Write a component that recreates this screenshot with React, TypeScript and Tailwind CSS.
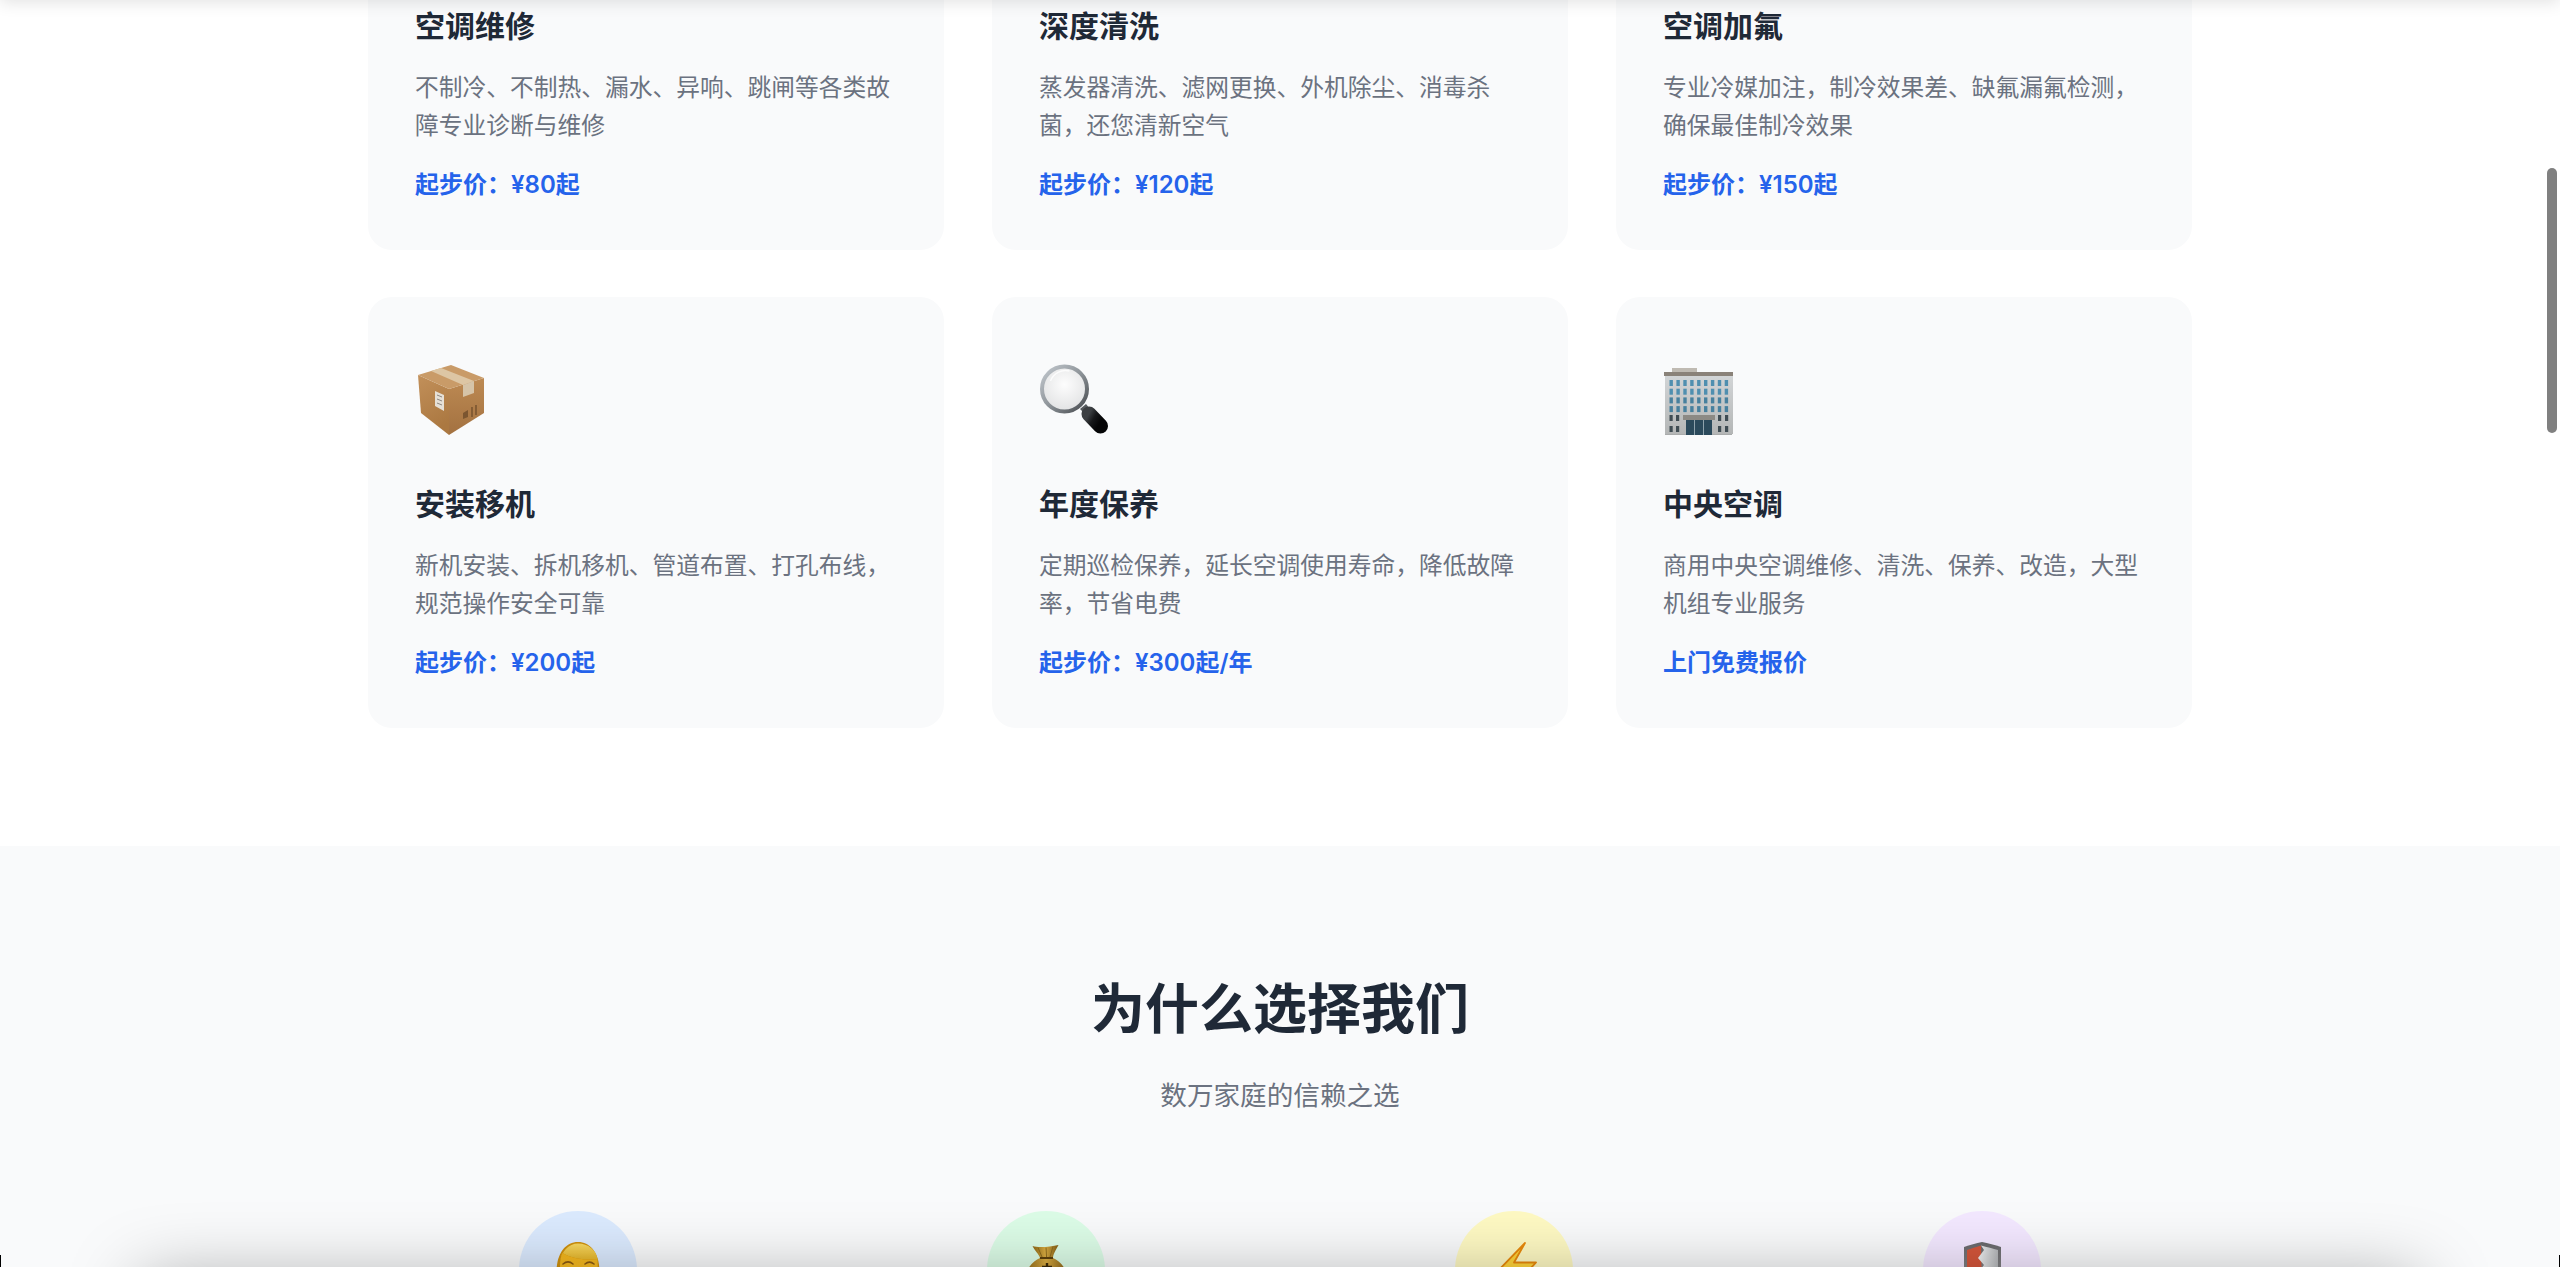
import type { ReactNode } from "react";

const BoxIcon = () => (
  <svg viewBox="0 0 72 72" className="w-[72px] h-[72px]">
    <defs>
      <linearGradient id="boxLeft" x1="0" y1="0" x2="0.3" y2="1">
        <stop offset="0" stopColor="#c2905a" />
        <stop offset="1" stopColor="#ab7841" />
      </linearGradient>
      <linearGradient id="boxRight" x1="0" y1="0" x2="0" y2="1">
        <stop offset="0" stopColor="#bd8a53" />
        <stop offset="1" stopColor="#a37140" />
      </linearGradient>
    </defs>
    <path d="M2 12 L33 26 L33 72 L5 50 Z" fill="url(#boxLeft)" />
    <path d="M33 26 L68 15 L68 50 L33 72 Z" fill="url(#boxRight)" />
    <path d="M2 12 L35 2 L68 15 L33 26 Z" fill="#c99b68" />
    <path d="M15 8 L25 5 L58 18 L47 22 Z" fill="#ddc6a4" />
    <path d="M47 22 L58 18 L58 30 L47 34 Z" fill="#d6c4a8" />
    <path d="M19 28 L28 32 L28 48 L19 43 Z" fill="#e6e0d6" />
    <path d="M21 32 L26 34 M21 36 L26 38 M21 40 L26 42" stroke="#8b8680" strokeWidth="1" />
    <path d="M47 50 L52 47 L52 54 L47 56 Z" fill="#7b5530" />
    <path d="M56 44 L56 54 M60 42 L60 52" stroke="#7b5530" strokeWidth="1.6" />
  </svg>
);

const LensIcon = () => (
  <svg viewBox="0 0 72 72" className="w-[72px] h-[72px]">
    <defs>
      <linearGradient id="lensRing" x1="0" y1="0" x2="1" y2="1">
        <stop offset="0" stopColor="#c3c9cf" />
        <stop offset="0.5" stopColor="#8e9499" />
        <stop offset="1" stopColor="#45494d" />
      </linearGradient>
      <radialGradient id="lensGlass" cx="0.5" cy="0.4" r="0.65">
        <stop offset="0" stopColor="#fdfdfd" />
        <stop offset="1" stopColor="#dfe0e1" />
      </radialGradient>
      <linearGradient id="lensHandle" x1="0" y1="0" x2="1" y2="0.6">
        <stop offset="0" stopColor="#3c3f42" />
        <stop offset="0.45" stopColor="#17181a" />
        <stop offset="1" stopColor="#050506" />
      </linearGradient>
    </defs>
    <path d="M40 46 L46 41 L50 46 L45 51 Z" fill="#55595d" />
    <path d="M49 51 L60.5 63" stroke="url(#lensHandle)" strokeWidth="15" strokeLinecap="round" />
    <circle cx="24.5" cy="26" r="22.5" fill="url(#lensGlass)" stroke="url(#lensRing)" strokeWidth="4" />
    <path d="M10.5 18 A16 16 0 0 1 29.5 8" fill="none" stroke="#ffffff" strokeWidth="1.5" opacity="0.8" />
  </svg>
);

const BuildingIcon = () => {
  const rows = [0, 1, 2, 3];
  const cols = [0, 1, 2, 3, 4, 5, 6, 7, 8];
  return (
    <svg viewBox="0 0 72 72" className="w-[72px] h-[72px]">
      <defs>
        <linearGradient id="wall" x1="0" y1="0" x2="0" y2="1">
          <stop offset="0" stopColor="#d3d6d8" />
          <stop offset="1" stopColor="#b4b6b6" />
        </linearGradient>
      </defs>
      <rect x="8" y="5" width="25" height="6" fill="#bfbab2" />
      <rect x="1" y="70" width="67" height="2" fill="#a9abab" />
      <rect x="1" y="10" width="68" height="61" fill="url(#wall)" />
      <rect x="0" y="9" width="69" height="4" fill="#8a8279" />
      {rows.map((r) =>
        cols.map((c) => (
          <rect key={`${r}-${c}`} x={5.5 + c * 6.9} y={17 + r * 8.7} width="3.4" height="6" fill={r < 2 ? "#4f8fb0" : "#47809e"} />
        )),
      )}
      {[0, 1].map((r) => (
        <g key={r} fill="#3f4c53">
          <rect x="5.5" y={52 + r * 11} width="3.2" height="6" />
          <rect x="12" y={52 + r * 11} width="3.2" height="6" />
          <rect x="54" y={52 + r * 11} width="3.2" height="6" />
          <rect x="61" y={52 + r * 11} width="3.2" height="6" />
        </g>
      ))}
      <rect x="19" y="52" width="32" height="5" fill="#8c8a85" />
      <rect x="22" y="57" width="26" height="15" fill="#2b4a5c" />
      <path d="M30.5 57 V72 M39.5 57 V72" stroke="#8fa3ad" strokeWidth="1" />
    </svg>
  );
};

const FaceIcon = () => (
  <svg viewBox="0 0 56 56" className="w-14 h-14">
    <defs>
      <linearGradient id="hairTop" x1="0" y1="0" x2="0" y2="1">
        <stop offset="0" stopColor="#f8d963" />
        <stop offset="1" stopColor="#e0a915" />
      </linearGradient>
      <linearGradient id="skin" x1="0" y1="0" x2="0" y2="1">
        <stop offset="0" stopColor="#f3b51c" />
        <stop offset="1" stopColor="#fbc62d" />
      </linearGradient>
    </defs>
    <path d="M6.5 30 C6.5 12 15 0 28 0 C41 0 49.5 12 49.5 30 L49.5 56 L6.5 56 Z" fill="#cf900c" />
    <path d="M10 24 C10 9 19 1.5 28 1.5 C38 1.5 46.5 8 47.5 17 C40 18 24 18 12.5 11 C11 14 10 19 10 24 Z" fill="url(#hairTop)" />
    <path d="M10 24 C10 19 11 14 12.5 11 C24 18 40 18 47.5 17 C48 22 47.5 50 46 56 L11 56 C10 48 9.5 32 10 24 Z" fill="url(#skin)" />
    <path d="M13 22 C16 19.5 20 19.5 23 22 M35 22 C38 19.5 41 19.5 44 22" fill="none" stroke="#8a5a12" strokeWidth="1.6" strokeLinecap="round" />
    <ellipse cx="19" cy="30" rx="2.5" ry="3.5" fill="#5c3b10" />
    <ellipse cx="38" cy="30" rx="2.5" ry="3.5" fill="#5c3b10" />
  </svg>
);

const BagIcon = () => (
  <svg viewBox="0 0 56 56" className="w-14 h-14">
    <defs>
      <linearGradient id="bag" x1="0" y1="0" x2="1" y2="0">
        <stop offset="0" stopColor="#8b6414" />
        <stop offset="0.5" stopColor="#dcae42" />
        <stop offset="1" stopColor="#7f5a12" />
      </linearGradient>
    </defs>
    <path d="M14.5 4 C20 6 32 5 40.5 3 C38 8 35 12 35 16 L22 16 C21 12 17 9 14.5 4 Z" fill="url(#bag)" />
    <path d="M20 5.5 L24 15 M28 5.5 L28.5 15 M35 4.5 L32 15" stroke="#8d6a1c" strokeWidth="1" />
    <path d="M22 16 L35 16 C44 20 53 32 50 44 C49 53 40 56 28 56 C16 56 7 53 6 44 C4 32 13 20 22 16 Z" fill="url(#bag)" />
    <path d="M22 16 H35" stroke="#5c3f0c" strokeWidth="2" />
    <path d="M29 21 V28 M24 25 H34" stroke="#3d2a08" strokeWidth="2.4" />
  </svg>
);

const BoltIcon = () => (
  <svg viewBox="0 0 56 56" className="w-14 h-14">
    <path d="M39 1 L6 35 L24 32 L17 56 L50 20.5 L28 20.5 Z" fill="#ffd43b" stroke="#e8890c" strokeWidth="1.8" strokeLinejoin="round" />
  </svg>
);

const ShieldIcon = () => (
  <svg viewBox="0 0 56 56" className="w-14 h-14">
    <defs>
      <linearGradient id="shieldRim" x1="0" y1="0" x2="0" y2="1">
        <stop offset="0" stopColor="#68686b" />
        <stop offset="1" stopColor="#9a9a9d" />
      </linearGradient>
      <linearGradient id="shieldSilver" x1="0" y1="0" x2="1" y2="0">
        <stop offset="0" stopColor="#f2f3f4" />
        <stop offset="1" stopColor="#b4b6b9" />
      </linearGradient>
    </defs>
    <path d="M10 5 C16 3 22 1 28 0 C34 1 41 3 47 5 L47 30 C47 42 38 50 28 56 C18 50 10 42 10 30 Z" fill="url(#shieldRim)" />
    <path d="M13 8 C17 6.5 22 5 27 3.5 L28 53 C19 48 13 41 13 30 Z" fill="#d4563b" />
    <path d="M27 3.5 L30 8 L24 16 L30 23 L24 31 L30 38 L28 53 C37 48 44 41 44 30 L44 8 C39 6.5 33 5 27 3.5 Z" fill="url(#shieldSilver)" />
  </svg>
);

const services: { title: string; desc: string[]; price: string; icon?: ReactNode }[] = [
  { title: "空调维修", desc: ["不制冷、不制热、漏水、异响、跳闸等各类故", "障专业诊断与维修"], price: "起步价：¥80起" },
  { title: "深度清洗", desc: ["蒸发器清洗、滤网更换、外机除尘、消毒杀", "菌，还您清新空气"], price: "起步价：¥120起" },
  { title: "空调加氟", desc: ["专业冷媒加注，制冷效果差、缺氟漏氟检测，", "确保最佳制冷效果"], price: "起步价：¥150起" },
  { title: "安装移机", desc: ["新机安装、拆机移机、管道布置、打孔布线，", "规范操作安全可靠"], price: "起步价：¥200起", icon: <BoxIcon /> },
  { title: "年度保养", desc: ["定期巡检保养，延长空调使用寿命，降低故障", "率，节省电费"], price: "起步价：¥300起/年", icon: <LensIcon /> },
  { title: "中央空调", desc: ["商用中央空调维修、清洗、保养、改造，大型", "机组专业服务"], price: "上门免费报价", icon: <BuildingIcon /> },
];

const reasons = [
  { bg: "bg-[#dbeafe]", icon: <FaceIcon /> },
  { bg: "bg-[#dcfce7]", icon: <BagIcon /> },
  { bg: "bg-[#fef9c3]", icon: <BoltIcon /> },
  { bg: "bg-[#f3e8ff]", icon: <ShieldIcon /> },
];

export default function App() {
  return (
    <div className="relative h-screen overflow-hidden bg-white font-['Inter','Noto_Sans_CJK_SC',sans-serif]">
      {/* Services */}
      <section className="-mt-[181px] pb-[118px]">
        <div className="max-w-[1920px] mx-auto px-12 grid grid-cols-3 gap-x-12 gap-y-[47px]">
          {services.map((s) => (
            <div key={s.title} className="bg-[#f9fafb] rounded-3xl pt-12 pl-[47px] pr-12 pb-[46px]">
              <div className="h-[90px] flex items-end ml-px mb-[46px]">{s.icon}</div>
              <h3 className="text-[30px] leading-[46px] font-semibold text-[#1f2937] mb-[20px]">{s.title}</h3>
              <p className="text-[23.75px] leading-[38px] text-[#6b7280] mb-[21px]">
                {s.desc.map((line) => (
                  <span key={line} className="block whitespace-nowrap">{line}</span>
                ))}
              </p>
              <div className="text-2xl leading-[38px] font-semibold text-[#2563eb]">{s.price}</div>
            </div>
          ))}
        </div>
      </section>

      {/* Why us */}
      <section className="bg-[#f9fafb] pt-[121px]">
        <div className="max-w-[1920px] mx-auto px-12">
          <h2 className="text-[54px] leading-[86px] font-bold text-[#1f2937] text-center mb-[21px]">为什么选择我们</h2>
          <p className="text-[26.6px] leading-[43px] text-[#6b7280] text-center mb-[94px]">数万家庭的信赖之选</p>
          <div className="grid grid-cols-4 gap-12">
            {reasons.map((r, i) => (
              <div key={i} className="flex justify-center">
                <div className={`w-[118px] h-[118px] rounded-full flex items-center justify-center ${r.bg}`}>{r.icon}</div>
              </div>
            ))}
          </div>
        </div>
      </section>

      {/* nav + floating bar sit just outside the window, only their shadows show */}
      <div className="fixed left-0 right-0 -top-[60px] h-[60px] bg-white shadow-[0_2px_16px_rgba(0,0,0,0.12)]" />
      <div className="fixed left-[140px] right-[140px] -bottom-[93px] h-[80px] bg-white shadow-[0_0_70px_rgba(0,0,0,0.34)]" />

      {/* Scrollbar */}
      <div className="fixed right-[3px] top-[168px] w-[10px] h-[265px] rounded-full bg-[#808080]" />

      {/* window corners */}
      <div className="fixed left-0 bottom-0 w-px h-3 bg-black" />
      <div className="fixed right-0 bottom-0 w-px h-3 bg-black" />
    </div>
  );
}
